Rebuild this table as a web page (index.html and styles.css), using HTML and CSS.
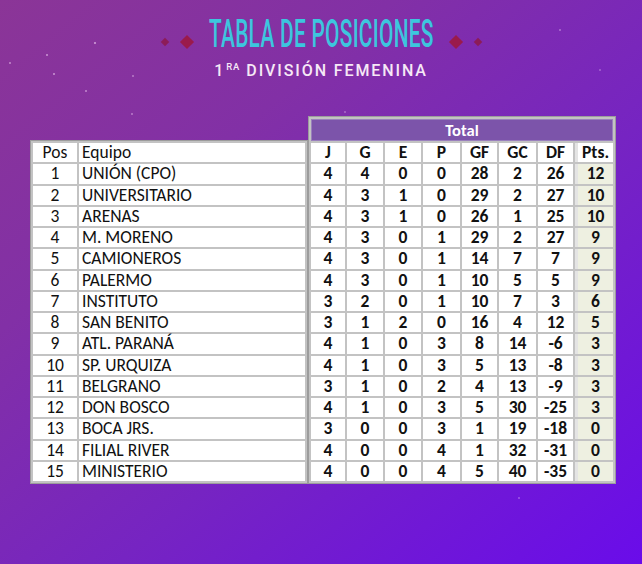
FILE: index.html
```html
<!DOCTYPE html>
<html lang="es">
<head>
<meta charset="utf-8">
<title>Tabla de posiciones</title>
<link rel="stylesheet" href="styles.css">
</head>
<body>
<div class="page">
  <header class="head">
    <div class="title-row">
      <span class="dia dia-s"></span>
      <span class="dia dia-b"></span>
      <div class="title-box"><h1 class="title">TABLA DE POSICIONES</h1></div>
      <span class="dia dia-b"></span>
      <span class="dia dia-s"></span>
    </div>
    <p class="subtitle">1<sup class="sup">RA</sup> DIVISIÓN FEMENINA</p>
  </header>

  <div class="tables">
    <table class="tbl tbl-left">
      <tbody>
        <tr><td class="pos">Pos</td><td class="team">Equipo</td></tr>
        <tr><td class="pos">1</td><td class="team">UNIÓN (CPO)</td></tr>
        <tr><td class="pos">2</td><td class="team">UNIVERSITARIO</td></tr>
        <tr><td class="pos">3</td><td class="team">ARENAS</td></tr>
        <tr><td class="pos">4</td><td class="team">M. MORENO</td></tr>
        <tr><td class="pos">5</td><td class="team">CAMIONEROS</td></tr>
        <tr><td class="pos">6</td><td class="team">PALERMO</td></tr>
        <tr><td class="pos">7</td><td class="team">INSTITUTO</td></tr>
        <tr><td class="pos">8</td><td class="team">SAN BENITO</td></tr>
        <tr><td class="pos">9</td><td class="team">ATL. PARANÁ</td></tr>
        <tr><td class="pos">10</td><td class="team">SP. URQUIZA</td></tr>
        <tr><td class="pos">11</td><td class="team">BELGRANO</td></tr>
        <tr><td class="pos">12</td><td class="team">DON BOSCO</td></tr>
        <tr><td class="pos">13</td><td class="team">BOCA JRS.</td></tr>
        <tr><td class="pos">14</td><td class="team">FILIAL RIVER</td></tr>
        <tr><td class="pos">15</td><td class="team">MINISTERIO</td></tr>
      </tbody>
    </table>

    <table class="tbl tbl-right">
      <tbody>
        <tr><td class="total" colspan="8">Total</td></tr>
        <tr class="hdr"><td class="c-j">J</td><td class="c-g">G</td><td class="c-e">E</td><td class="c-p">P</td><td class="c-gf">GF</td><td class="c-gc">GC</td><td class="c-df">DF</td><td class="pts pts-h">Pts.</td></tr>
        <tr><td>4</td><td>4</td><td>0</td><td>0</td><td>28</td><td>2</td><td>26</td><td class="pts">12</td></tr>
        <tr><td>4</td><td>3</td><td>1</td><td>0</td><td>29</td><td>2</td><td>27</td><td class="pts">10</td></tr>
        <tr><td>4</td><td>3</td><td>1</td><td>0</td><td>26</td><td>1</td><td>25</td><td class="pts">10</td></tr>
        <tr><td>4</td><td>3</td><td>0</td><td>1</td><td>29</td><td>2</td><td>27</td><td class="pts">9</td></tr>
        <tr><td>4</td><td>3</td><td>0</td><td>1</td><td>14</td><td>7</td><td>7</td><td class="pts">9</td></tr>
        <tr><td>4</td><td>3</td><td>0</td><td>1</td><td>10</td><td>5</td><td>5</td><td class="pts">9</td></tr>
        <tr><td>3</td><td>2</td><td>0</td><td>1</td><td>10</td><td>7</td><td>3</td><td class="pts">6</td></tr>
        <tr><td>3</td><td>1</td><td>2</td><td>0</td><td>16</td><td>4</td><td>12</td><td class="pts">5</td></tr>
        <tr><td>4</td><td>1</td><td>0</td><td>3</td><td>8</td><td>14</td><td>-6</td><td class="pts">3</td></tr>
        <tr><td>4</td><td>1</td><td>0</td><td>3</td><td>5</td><td>13</td><td>-8</td><td class="pts">3</td></tr>
        <tr><td>3</td><td>1</td><td>0</td><td>2</td><td>4</td><td>13</td><td>-9</td><td class="pts">3</td></tr>
        <tr><td>4</td><td>1</td><td>0</td><td>3</td><td>5</td><td>30</td><td>-25</td><td class="pts">3</td></tr>
        <tr><td>3</td><td>0</td><td>0</td><td>3</td><td>1</td><td>19</td><td>-18</td><td class="pts">0</td></tr>
        <tr><td>4</td><td>0</td><td>0</td><td>4</td><td>1</td><td>32</td><td>-31</td><td class="pts">0</td></tr>
        <tr><td>4</td><td>0</td><td>0</td><td>4</td><td>5</td><td>40</td><td>-35</td><td class="pts">0</td></tr>
      </tbody>
    </table>
  </div>
</div>
</body>
</html>
```

FILE: styles.css
```css
* { box-sizing: border-box; }

html, body {
  margin: 0;
  padding: 0;
}

body {
  width: 642px;
  height: 564px;
  overflow: hidden;
  background:
    radial-gradient(circle at 95px 43px, rgba(255,225,255,.85) 0, rgba(255,225,255,0) 1.6px),
    radial-gradient(circle at 47px 55px, rgba(255,225,255,.8) 0, rgba(255,225,255,0) 1.5px),
    radial-gradient(circle at 10px 63px, rgba(255,225,255,.7) 0, rgba(255,225,255,0) 1.5px),
    radial-gradient(circle at 54px 74px, rgba(255,225,255,.8) 0, rgba(255,225,255,0) 1.5px),
    radial-gradient(circle at 86px 91px, rgba(255,225,255,.7) 0, rgba(255,225,255,0) 1.5px),
    radial-gradient(circle at 133px 76px, rgba(255,225,255,.6) 0, rgba(255,225,255,0) 1.5px),
    radial-gradient(circle at 132px 114px, rgba(255,225,255,.6) 0, rgba(255,225,255,0) 1.5px),
    radial-gradient(circle at 560px 30px, rgba(255,225,255,.6) 0, rgba(255,225,255,0) 1.4px),
    radial-gradient(circle at 600px 70px, rgba(255,225,255,.5) 0, rgba(255,225,255,0) 1.4px),
    radial-gradient(circle at 345px 112px, rgba(255,225,255,.5) 0, rgba(255,225,255,0) 1.4px),
    radial-gradient(circle at 519px 498px, rgba(255,225,255,.5) 0, rgba(255,225,255,0) 1.4px),
    linear-gradient(140deg, #8b3597 0%, #8230a6 30%, #7624c2 60%, #6a0cea 100%);
  font-family: Carlito, Calibri, Lato, "Liberation Sans", sans-serif;
}

.page {
  display: flex;
  flex-direction: column;
}

/* ---------- header ---------- */
.head {
  display: flex;
  flex-direction: column;
  align-items: center;
  padding-top: 15px;
}

.title-row {
  display: flex;
  align-items: center;
  gap: 14px;
  height: 38px;
}

.title-box {
  width: 229px;
  display: flex;
  justify-content: center;
  margin: 0 1px;
}

.title {
  flex: none;
  margin: 0;
  font-family: Roboto, "Liberation Sans", sans-serif;
  font-weight: 500;
  font-size: 38px;
  line-height: 38px;
  color: #3cc6de;
  white-space: nowrap;
  transform: scaleX(0.55);
  letter-spacing: 0.5px;
}

.dia {
  display: block;
  flex: none;
  background: #9a1a4c;
  transform: rotate(45deg);
  margin-top: 15px;
}
.dia-b { width: 10px; height: 10px; }
.dia-s { width: 6px; height: 6px; background: #8c1c58; }

.subtitle {
  margin: 9px 0 0 0;
  font-family: Roboto, "Liberation Sans", sans-serif;
  font-weight: 500;
  font-size: 16px;
  line-height: 17px;
  letter-spacing: 1.9px;
  color: #f6e8f6;
  white-space: nowrap;
}

.sup {
  font-size: 9.5px;
  vertical-align: 0;
  position: relative;
  top: -6px;
  letter-spacing: 1px;
  margin-left: 1px;
}

/* ---------- tables ---------- */
.tables {
  display: flex;
  align-items: flex-end;
  padding-left: 30px;
  margin-top: 35px;
}

.tbl {
  border-collapse: separate;
  border-spacing: 2px;
  border: 1px solid #9c9c9c;
  background: #c3c3c3;
  table-layout: fixed;
}

.tbl td {
  height: 19.25px;
  padding: 0;
  background: #fff;
  color: #111;
  font-size: 17.5px;
  line-height: 19px;
  vertical-align: middle;
  white-space: nowrap;
}

.tbl-left td.pos {
  width: 44px;
  text-align: center;
}

.tbl-left td.team {
  width: 226px;
  padding-left: 3px;
  text-align: left;
}

.tbl-right td {
  text-align: center;
  font-weight: 700;
}

.tbl-right td.total {
  height: 22px;
  background: #7c54aa;
  color: #fff;
  font-size: 16.5px;
  line-height: 22px;
  box-shadow: inset 0 0 0 1px #9a80bd;
}

.c-j { width: 34px; }
.c-g { width: 36px; }
.c-e { width: 36px; }
.c-p { width: 37px; }
.c-gf { width: 35px; }
.c-gc { width: 37px; }
.c-df { width: 35px; }

.tbl-right td.pts {
  width: 38px;
  background: #eef0e1;
  border-left: 3px solid #e4e4e4;
}

.tbl-right td.pts-h {
  background: #fff;
}
```
